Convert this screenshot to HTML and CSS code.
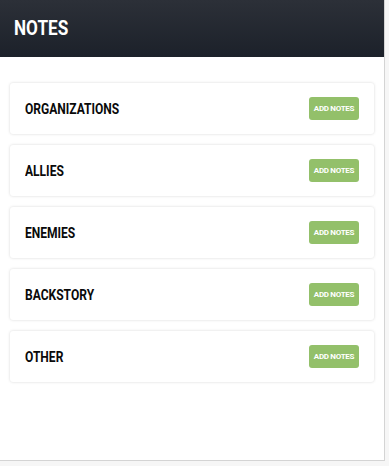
FILE: index.html
```html
<!DOCTYPE html>
<html lang="en">
<head>
    <meta charset="UTF-8">
    <meta name="viewport" content="width=device-width, initial-scale=1.0">
    <title>Notes</title>
    <link rel="stylesheet" href="styles.css">
</head>
<body>

    <div class="panel">
        <div class="panel-header">
            <h1>NOTES</h1>
        </div>

        <div class="note-list">
            <div class="note-card">
                <span class="note-title">ORGANIZATIONS</span>
                <button class="add-btn" type="button">ADD NOTES</button>
            </div>
            <div class="note-card">
                <span class="note-title">ALLIES</span>
                <button class="add-btn" type="button">ADD NOTES</button>
            </div>
            <div class="note-card">
                <span class="note-title">ENEMIES</span>
                <button class="add-btn" type="button">ADD NOTES</button>
            </div>
            <div class="note-card">
                <span class="note-title">BACKSTORY</span>
                <button class="add-btn" type="button">ADD NOTES</button>
            </div>
            <div class="note-card">
                <span class="note-title">OTHER</span>
                <button class="add-btn" type="button">ADD NOTES</button>
            </div>
        </div>
    </div>

</body>
</html>
```

FILE: styles.css
```css
body {
    font-family: Roboto, "Liberation Sans", sans-serif;
    margin: 0;
    padding: 0;
    background-color: #f6f6f6;
}

.panel {
    width: 384px;
    height: 460px;
    background: #fff;
    border-right: 1px solid #d4d4d4;
    border-bottom: 1px solid #d4d4d4;
}

.panel-header {
    height: 57px;
    display: flex;
    align-items: center;
    padding: 0 14px;
    background: linear-gradient(to bottom, #2c3038, #1c212a);
}

/* titles use a narrowed Roboto to mimic the condensed face */
.panel-header h1 {
    margin: 0;
    color: #fff;
    font-size: 19.5px;
    font-weight: 700;
    transform: scaleX(0.88);
    transform-origin: left center;
}

.note-list {
    display: flex;
    flex-direction: column;
    gap: 11px;
    padding: 26px 10px 0;
}

.note-card {
    height: 51px;
    display: flex;
    align-items: center;
    justify-content: space-between;
    padding: 0 15px;
    background: #fff;
    border-radius: 3px;
    box-shadow: 0 0 3px rgba(0, 0, 0, 0.16);
}

.note-title {
    display: inline-block;
    font-size: 14px;
    font-weight: 700;
    color: #0a0a0a;
    transform: scaleX(0.86);
    transform-origin: left center;
}

.add-btn {
    width: 50px;
    height: 23px;
    padding: 0;
    border: none;
    border-radius: 3px;
    background-color: #93c06a;
    color: #fff;
    font-family: Roboto, "Liberation Sans", sans-serif;
    font-size: 8px;
    font-weight: 700;
    letter-spacing: -0.3px;
    cursor: pointer;
}
```
